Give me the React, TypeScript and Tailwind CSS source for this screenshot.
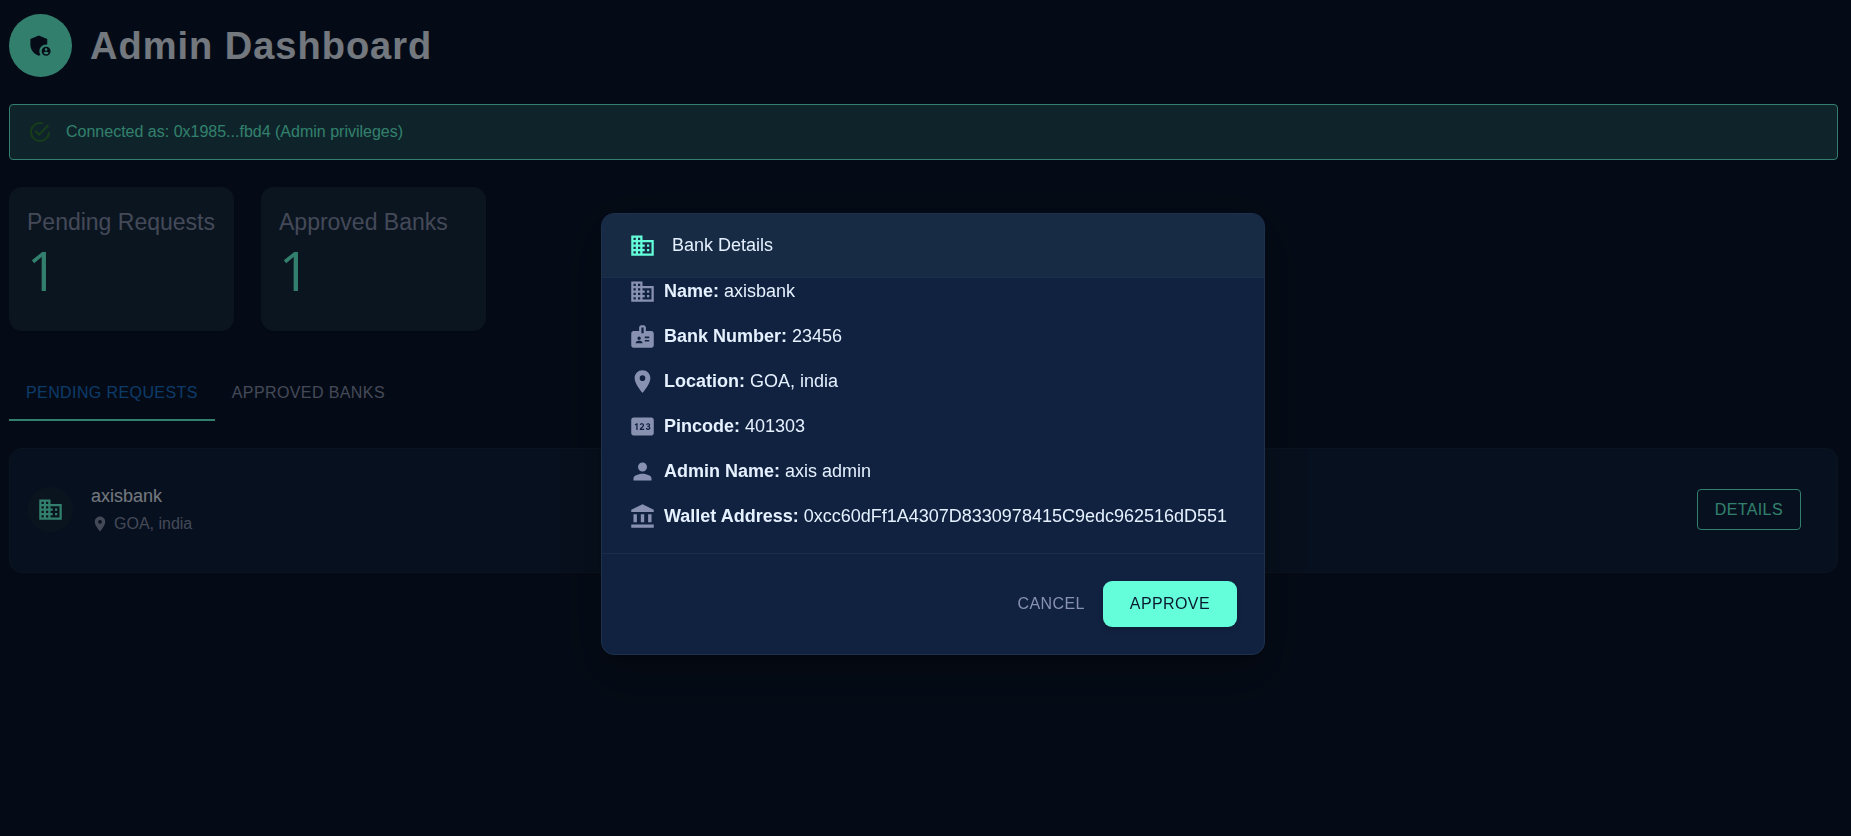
import React from "react";
import type { IconType } from "react-icons";
import {
  MdAccountBalance,
  MdAdminPanelSettings,
  MdBadge,
  MdBusiness,
  MdLocationOn,
  MdPerson,
  MdPin,
} from "react-icons/md";

const stats = [
  { label: "Pending Requests", value: 1 },
  { label: "Approved Banks", value: 1 },
];

const details: { icon: IconType; label: string; value: string }[] = [
  { icon: MdBusiness, label: "Name", value: "axisbank" },
  { icon: MdBadge, label: "Bank Number", value: "23456" },
  { icon: MdLocationOn, label: "Location", value: "GOA, india" },
  { icon: MdPin, label: "Pincode", value: "401303" },
  { icon: MdPerson, label: "Admin Name", value: "axis admin" },
  {
    icon: MdAccountBalance,
    label: "Wallet Address",
    value: "0xcc60dFf1A4307D8330978415C9edc962516dD551",
  },
];

function SuccessIcon() {
  return (
    <svg viewBox="0 0 24 24" className="size-6 fill-[#2e7d32]" aria-hidden="true">
      <path d="M20,12A8,8 0 0,1 12,20A8,8 0 0,1 4,12A8,8 0 0,1 12,4C12.76,4 13.5,4.11 14.2,4.31L15.77,2.74C14.61,2.26 13.34,2 12,2A10,10 0 0,0 2,12A10,10 0 0,0 12,22A10,10 0 0,0 22,12M7.91,10.08L6.5,11.5L11,16L21,6L19.59,4.58L11,13.17L7.91,10.08Z" />
    </svg>
  );
}

function Dashboard() {
  return (
    <main className="pt-3.5 pr-[13px] pl-[9px]">
      <header className="flex items-center gap-[18px]">
        <div className="flex size-[63px] items-center justify-center rounded-full bg-[#64ffda] text-[#0a192f]">
          <MdAdminPanelSettings className="size-[27px]" />
        </div>
        <h1 className="text-[38px] leading-[46px] font-bold tracking-[1px] text-[#e6f1ff]">
          Admin Dashboard
        </h1>
      </header>

      <div
        role="status"
        className="mt-[27px] flex h-14 items-center gap-[14px] rounded-[4px] border border-[#64ffda] bg-[#1f4654] px-[18px] text-base text-[#64ffda]"
      >
        <SuccessIcon />
        <p>Connected as: 0x1985...fbd4 (Admin privileges)</p>
      </div>

      <section className="mt-[27px] flex gap-[27px]">
        {stats.map((stat) => (
          <div key={stat.label} className="h-36 w-[225px] rounded-[13px] bg-[#162a40] px-[18px] pt-[18px] shadow-sm">
            <h2 className="text-[23px] leading-[34px] whitespace-nowrap text-[#8892b0]">{stat.label}</h2>
            <p className="font-['Open_Sans',sans-serif] text-[54px] leading-[62px] font-medium text-[#64ffda]">
              {stat.value}
            </p>
          </div>
        ))}
      </section>

      <nav className="mt-9 flex h-[54px] text-base tracking-wide" role="tablist">
        <button role="tab" aria-selected="true" className="border-b-2 border-[#64ffda] px-[17px] text-[#1976d2]">
          PENDING REQUESTS
        </button>
        <button role="tab" aria-selected="false" className="border-b-2 border-transparent px-[17px] text-[#8892b0]">
          APPROVED BANKS
        </button>
      </nav>

      <article className="mt-[27px] flex h-[125px] items-center rounded-[13px] border border-[#15283f] bg-[#0f203c] pr-9 pb-0.5 pl-[18px]">
        <div className="flex size-[45px] items-center justify-center rounded-full bg-[#13283e] text-[#64ffda]">
          <MdBusiness className="size-[27px]" />
        </div>
        <div className="ml-[18px] flex-1">
          <h3 className="text-lg leading-7 text-[#e6f1ff]">axisbank</h3>
          <p className="flex items-center gap-[5px] text-base leading-7 text-[#8892b0]">
            <MdLocationOn className="size-[18px]" />
            GOA, india
          </p>
        </div>
        <button className="h-[41px] rounded-[4px] border border-[#64ffda] px-[17px] text-base tracking-wide text-[#64ffda]">
          DETAILS
        </button>
      </article>
    </main>
  );
}

function BankDialog() {
  return (
    <div className="fixed inset-0 flex items-center justify-center bg-black/50 pt-[31px] pl-[15px]">
      <div
        role="dialog"
        aria-modal="true"
        aria-labelledby="dialog-title"
        className="w-full max-w-[664px] overflow-hidden rounded-[13px] border border-[#1d314d] bg-[#112240] text-lg shadow-[0_11px_15px_-7px_rgba(0,0,0,0.2),0_24px_38px_3px_rgba(0,0,0,0.14),0_9px_46px_8px_rgba(0,0,0,0.12)]"
      >
        <header className="flex h-16 items-center gap-4 border-b border-[#1a2f49] bg-[#182b45] px-[27px]">
          <MdBusiness className="size-[27px] text-[#64ffda]" />
          <h2 id="dialog-title" className="leading-[26px] text-[#e6f1ff]">Bank Details</h2>
        </header>
        <ul className="flex flex-col gap-[18px] px-[27px] pb-[23px]">
          {details.map(({ icon: Icon, label, value }) => (
            <li key={label} className="flex items-start gap-2 text-[#e6f1ff]">
              <Icon className="size-[27px] shrink-0 text-[#8892b0]" />
              <p className="leading-[26px]">
                <strong>{label}:</strong> {value}
              </p>
            </li>
          ))}
        </ul>
        <footer className="flex items-center justify-end gap-[18px] border-t border-[#1b2d4a] p-[27px] text-base">
          <button className="tracking-wide text-[#8892b0]">CANCEL</button>
          <button className="h-[46px] rounded-[9px] bg-[#64ffda] px-[27px] tracking-wide text-[#0a192f] shadow-md">
            APPROVE
          </button>
        </footer>
      </div>
    </div>
  );
}

export default function App() {
  return (
    <div className="min-h-screen bg-[#0a172d] font-['Liberation_Sans',Arial,sans-serif]">
      <Dashboard />
      <BankDialog />
    </div>
  );
}
